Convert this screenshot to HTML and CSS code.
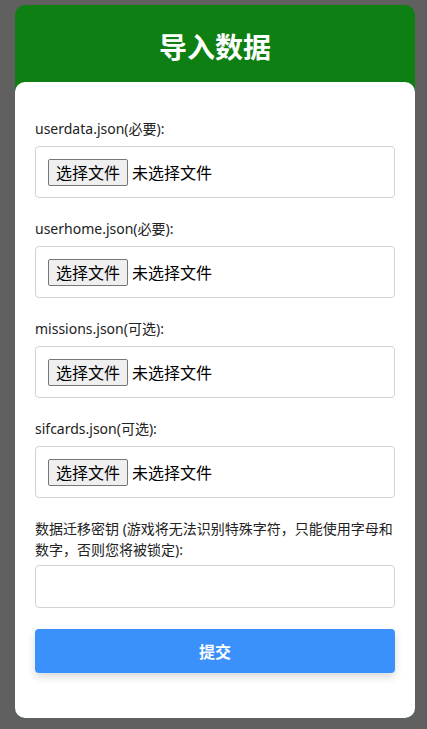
FILE: index.html
```html
<!DOCTYPE html>
<html lang="zh-CN">
<head>
<meta charset="utf-8">
<title>导入数据</title>
<link rel="stylesheet" href="styles.css">
</head>
<body>
<div class="card">
  <div class="card-header"><h1 class="title">导入数据</h1></div>
  <form class="card-body">
    <div class="field">
      <label class="label">userdata.json(必要):</label>
      <div class="file-box"><span class="file-btn">选择文件</span><span class="file-text">未选择文件</span></div>
    </div>
    <div class="field">
      <label class="label">userhome.json(必要):</label>
      <div class="file-box"><span class="file-btn">选择文件</span><span class="file-text">未选择文件</span></div>
    </div>
    <div class="field">
      <label class="label">missions.json(可选):</label>
      <div class="file-box"><span class="file-btn">选择文件</span><span class="file-text">未选择文件</span></div>
    </div>
    <div class="field">
      <label class="label">sifcards.json(可选):</label>
      <div class="file-box"><span class="file-btn">选择文件</span><span class="file-text">未选择文件</span></div>
    </div>
    <div class="field field-key">
      <label class="label">数据迁移密钥 (游戏将无法识别特殊字符，只能使用字母和数字，否则您将被锁定):</label>
      <div class="text-box"></div>
    </div>
    <div class="submit">提交</div>
  </form>
</div>
</body>
</html>
```

FILE: styles.css
```css
html, body {
  margin: 0;
  padding: 0;
  background: #606060;
}
body {
  font-family: "Noto Sans", "Noto Sans CJK SC", sans-serif;
  color: #222;
  padding: 5px 12px 11px 15px;
}
.card {
  width: 400px;
  height: 713px;
  background: #0e7f12;
  border-radius: 10px;
  overflow: hidden;
  display: flex;
  flex-direction: column;
}
.card-header {
  height: 77px;
  display: flex;
  align-items: center;
  justify-content: center;
  padding-top: 4px;
  box-sizing: border-box;
}
.title {
  margin: 0;
  color: #fff;
  font-family: "Noto Sans CJK SC", sans-serif;
  font-size: 28px;
  font-weight: 700;
  line-height: 1;
}
.card-body {
  flex: 1;
  background: #fff;
  border-radius: 10px 10px 0 0;
  padding: 36px 20px 0 20px;
  margin: 0;
  display: flex;
  flex-direction: column;
}
.field {
  display: flex;
  flex-direction: column;
  gap: 7px;
  margin-bottom: 20px;
}
.field-key {
  gap: 5px;
  margin-bottom: 21px;
}
.label {
  font-size: 14px;
  line-height: 21px;
  color: #222;
}
.file-box {
  height: 52px;
  box-sizing: border-box;
  border: 1px solid #d3d3d3;
  border-radius: 4px;
  display: flex;
  align-items: center;
  padding-left: 12px;
  gap: 4px;
}
.file-btn {
  font-family: "Noto Sans CJK SC", sans-serif;
  font-size: 16px;
  line-height: 25px;
  height: 27px;
  box-sizing: border-box;
  padding: 0 7px;
  background: #efefef;
  border: 1px solid #767676;
  border-radius: 2px;
  color: #000;
  display: flex;
  align-items: center;
}
.file-text {
  font-family: "Noto Sans CJK SC", sans-serif;
  font-size: 16px;
  color: #000;
}
.text-box {
  height: 43px;
  box-sizing: border-box;
  border: 1px solid #d3d3d3;
  border-radius: 4px;
}
.submit {
  height: 44px;
  background: #3a91fb;
  border-radius: 4px;
  color: #fff;
  font-family: "Noto Sans CJK SC", sans-serif;
  font-size: 16px;
  font-weight: 700;
  display: flex;
  align-items: center;
  justify-content: center;
  box-shadow: 0 4px 8px rgba(0, 0, 0, 0.15);
}
```
